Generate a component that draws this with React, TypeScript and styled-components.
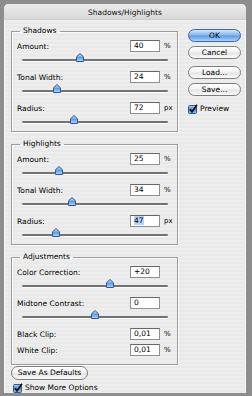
import React from 'react';
import styled, { createGlobalStyle } from 'styled-components';

const GlobalStyle = createGlobalStyle`
	html, body {
		margin: 0;
		padding: 0;
		background: #8d8d8d;
	}
	body {
		font-family: "DejaVu Sans", "Liberation Sans", sans-serif;
		color: #000;
	}
`;

type Param = {
	label: string;
	value: string;
	unit?: string;
	pos?: number;
	selected?: boolean;
};

const shadows: Param[] = [
	{ label: 'Amount:', value: '40', unit: '%', pos: 0.4 },
	{ label: 'Tonal Width:', value: '24', unit: '%', pos: 0.24 },
	{ label: 'Radius:', value: '72', unit: 'px', pos: 0.356 },
];

const highlights: Param[] = [
	{ label: 'Amount:', value: '25', unit: '%', pos: 0.25 },
	{ label: 'Tonal Width:', value: '34', unit: '%', pos: 0.34 },
	{ label: 'Radius:', value: '47', unit: 'px', pos: 0.233, selected: true },
];

const adjustments: Param[] = [
	{ label: 'Color Correction:', value: '+20', pos: 0.6 },
	{ label: 'Midtone Contrast:', value: '0', pos: 0.5 },
	{ label: 'Black Clip:', value: '0,01', unit: '%' },
	{ label: 'White Clip:', value: '0,01', unit: '%' },
];

function Thumb() {
	return (
		<svg width="8" height="9" viewBox="0 0 8 9">
			<defs>
				<linearGradient id="thumbFill" x1="0" y1="0" x2="0" y2="1">
					<stop offset="0" stopColor="#d8e9fc" />
					<stop offset="0.5" stopColor="#5d9de4" />
					<stop offset="1" stopColor="#b5dcfb" />
				</linearGradient>
			</defs>
			<path
				d="M4 0.5 L7.5 3.8 V8.5 H0.5 V3.8 Z"
				fill="url(#thumbFill)"
				stroke="#2d5a96"
				strokeWidth="1"
				strokeLinejoin="round"
			/>
		</svg>
	);
}

function CheckMark() {
	return (
		<svg width="10" height="10" viewBox="0 0 10 10">
			<defs>
				<linearGradient id="boxFill" x1="0" y1="0" x2="0" y2="1">
					<stop offset="0" stopColor="#a9cdf5" />
					<stop offset="0.5" stopColor="#4f8fdc" />
					<stop offset="1" stopColor="#8cc4f7" />
				</linearGradient>
			</defs>
			<rect x="0.5" y="1.5" width="8" height="8" rx="1" fill="url(#boxFill)" stroke="#2f5a94" />
			<path d="M2 5.2 L4 7.8 L9 0.8" fill="none" stroke="#0d0d0d" strokeWidth="1.6" />
		</svg>
	);
}

function ParamBlock({ label, value, unit, pos, selected }: Param) {
	return (
		<Block>
			<Row>
				<Label>{label}</Label>
				<Field>{selected ? <Selection>{value}</Selection> : value}</Field>
				<Unit>{unit}</Unit>
			</Row>
			{pos !== undefined && (
				<Slider>
					<Track />
					<ThumbWrap style={{ left: `${pos * 100}%` }}>
						<Thumb />
					</ThumbWrap>
				</Slider>
			)}
		</Block>
	);
}

function Group({ title, params, tail }: { title: string; params: Param[]; tail?: boolean }) {
	return (
		<Box $tail={tail}>
			<Legend>{title}</Legend>
			{params.map((p) => (
				<ParamBlock key={p.label} {...p} />
			))}
		</Box>
	);
}

export default function App() {
	return (
		<>
			<GlobalStyle />
			<Window>
				<TitleBar>Shadows/Highlights</TitleBar>
				<Body>
					<LeftCol>
						<Group title="Shadows" params={shadows} />
						<Group title="Highlights" params={highlights} />
						<Group title="Adjustments" params={adjustments} tail />
						<Footer>
							<Button $wide>Save As Defaults</Button>
							<Check $indent>
								<CheckMark />
								<span>Show More Options</span>
							</Check>
						</Footer>
					</LeftCol>
					<RightCol>
						<Button $primary>OK</Button>
						<Button>Cancel</Button>
						<Button $space>Load...</Button>
						<Button>Save...</Button>
						<Check $space>
							<CheckMark />
							<span>Preview</span>
						</Check>
					</RightCol>
				</Body>
			</Window>
		</>
	);
}

const Window = styled.div`
	width: 242px;
	height: 389px;
	margin: 4px 0 0 4px;
	border-radius: 5px 5px 0 0;
	overflow: hidden;
	display: flex;
	flex-direction: column;
	background: repeating-linear-gradient(
		to bottom,
		#ededed 0 2px,
		#e9e9e9 2px 4px
	);
	box-shadow: inset 1px 0 0 #fafafa, inset -1px 0 0 #fafafa;
`;

const TitleBar = styled.div`
	height: 16px;
	line-height: 17px;
	text-align: center;
	font-size: 7.5px;
	color: #111;
	background: linear-gradient(#ebebeb, #d8d8d8);
	border-bottom: 1px solid #cfcfcf;
	box-sizing: border-box;
`;

const Body = styled.div`
	display: flex;
	padding: 6px 0 0 7px;
`;

const LeftCol = styled.div`
	width: 167px;
	display: flex;
	flex-direction: column;
	gap: 7px;
`;

const RightCol = styled.div`
	width: 53px;
	margin-left: 10px;
	padding-top: 3px;
	display: flex;
	flex-direction: column;
	gap: 4px;
`;

const Box = styled.fieldset<{ $tail?: boolean }>`
	margin: 0;
	padding: 3px 4px ${(p) => (p.$tail ? '7px' : '1px')} 5px;
	border: 1px solid #9c9c9c;
	box-shadow: 1px 1px 0 #fbfbfb, inset 1px 1px 0 #fbfbfb;
	display: flex;
	flex-direction: column;
	gap: 2px;
	min-width: 0;
`;

const Legend = styled.legend`
	margin-left: 3px;
	padding: 0 3px;
	font-size: 7.5px;
	line-height: 10px;
`;

const Block = styled.div`
	display: flex;
	flex-direction: column;
`;

const Row = styled.div`
	display: flex;
	align-items: center;
	height: 14px;
`;

const Label = styled.span`
	flex: 1;
	font-size: 7.5px;
	white-space: nowrap;
`;

const Field = styled.div`
	width: 30px;
	height: 12px;
	box-sizing: border-box;
	border: 1px solid #8f8f8f;
	border-top-color: #666;
	background: #fff;
	font-size: 7.5px;
	line-height: 10px;
	padding-left: 3px;
`;

const Selection = styled.span`
	background: #b4d4fb;
`;

const Unit = styled.span`
	width: 13px;
	padding-left: 4px;
	box-sizing: border-box;
	font-size: 7px;
`;

const Slider = styled.div`
	position: relative;
	height: 15px;
	margin: 0 5px;
`;

const Track = styled.div`
	margin-top: 6px;
	height: 2px;
	background: #727272;
	box-shadow: 0 1px 0 #fdfdfd;
	border-radius: 1px;
`;

const ThumbWrap = styled.div`
	position: absolute;
	top: 0px;
	width: 8px;
	height: 9px;
	transform: translateX(-50%);
	line-height: 0;
`;

const Footer = styled.div`
	display: flex;
	flex-direction: column;
	gap: 3px;
	margin-top: -6px;
`;

const Button = styled.div<{ $primary?: boolean; $wide?: boolean; $space?: boolean }>`
	width: ${(p) => (p.$wide ? '77px' : '53px')};
	height: ${(p) => (p.$wide ? '14px' : '13px')};
	margin-top: ${(p) => (p.$space ? '3px' : '0')};
	box-sizing: border-box;
	border-radius: 7px;
	border: 1px solid ${(p) => (p.$primary ? '#3a68a8' : '#7d7d7d')};
	background: ${(p) =>
		p.$primary
			? 'linear-gradient(#d2e4fa 0%, #8ab9ee 45%, #5f9ce6 55%, #a8d4fa 100%)'
			: 'linear-gradient(#ffffff 0%, #f3f3f3 45%, #e4e4e4 55%, #fafafa 100%)'};
	font-size: 7.5px;
	line-height: 11px;
	text-align: center;
`;

const Check = styled.div<{ $indent?: boolean; $space?: boolean }>`
	display: flex;
	align-items: center;
	gap: 2px;
	margin-left: ${(p) => (p.$indent ? '2px' : '0')};
	margin-top: ${(p) => (p.$space ? '4px' : '0')};
	font-size: 7.5px;
	line-height: 10px;

	svg {
		flex: none;
	}
`;
